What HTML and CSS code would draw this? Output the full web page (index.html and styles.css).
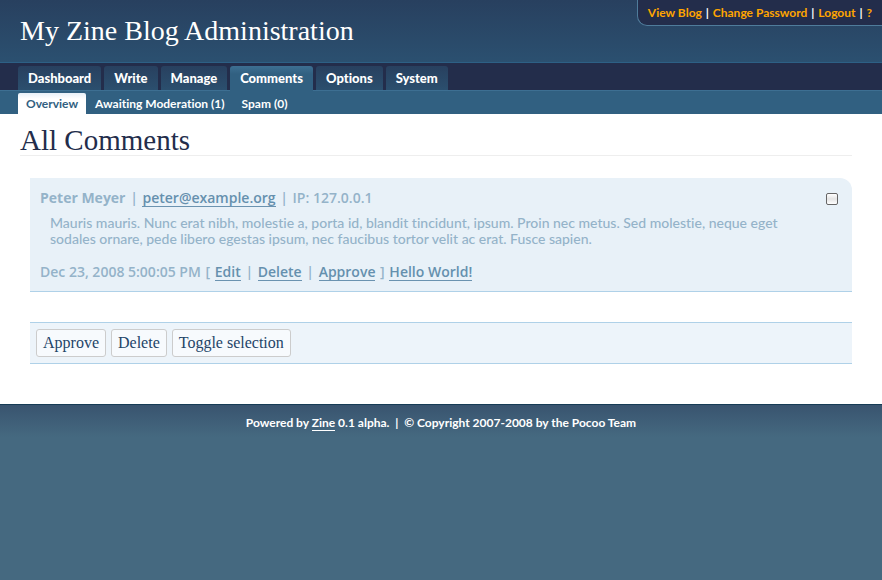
FILE: index.html
```html
<!DOCTYPE html>
<html lang="en">
<head>
<meta charset="utf-8">
<title>All Comments</title>
<link rel="stylesheet" href="styles.css">
</head>
<body>
<header class="header">
  <h1 class="title">My Zine Blog Administration</h1>
  <div class="account"><a href="#">View Blog</a> <span class="sep">|</span> <a href="#">Change Password</a> <span class="sep">|</span> <a href="#">Logout</a> <span class="sep">|</span> <a href="#">?</a></div>
</header>
<nav class="tabs">
  <a href="#">Dashboard</a>
  <a href="#">Write</a>
  <a href="#">Manage</a>
  <a href="#" class="active">Comments</a>
  <a href="#">Options</a>
  <a href="#">System</a>
</nav>
<nav class="subtabs">
  <a href="#" class="active">Overview</a>
  <a href="#">Awaiting Moderation (1)</a>
  <a href="#">Spam (0)</a>
</nav>
<main class="page">
  <h2 class="heading">All Comments</h2>
  <form class="comments">
    <article class="comment">
      <div class="comment-head">
        <p class="meta"><strong>Peter Meyer</strong> <span class="sep">|</span> <a href="#">peter@example.org</a> <span class="sep">|</span> IP: 127.0.0.1</p>
        <input type="checkbox" class="select" aria-label="Select comment">
      </div>
      <p class="text">Mauris mauris. Nunc erat nibh, molestie a, porta id, blandit tincidunt, ipsum. Proin nec metus. Sed molestie, neque eget sodales ornare, pede libero egestas ipsum, nec faucibus tortor velit ac erat. Fusce sapien.</p>
      <p class="meta">Dec 23, 2008 5:00:05 PM <span class="sep">[</span> <a href="#">Edit</a> <span class="sep">|</span> <a href="#">Delete</a> <span class="sep">|</span> <a href="#">Approve</a> <span class="sep">]</span> <a href="#">Hello World!</a></p>
    </article>
    <div class="actions">
      <button type="button">Approve</button>
      <button type="button">Delete</button>
      <button type="button">Toggle selection</button>
    </div>
  </form>
</main>
<footer class="footer">Powered by <a href="#">Zine</a> 0.1 alpha. &nbsp;|&nbsp; © Copyright 2007-2008 by the Pocoo Team</footer>
</body>
</html>
```
FILE: styles.css
```css
* { box-sizing: border-box; }

body {
  margin: 0;
  min-height: 100vh;
  display: flex;
  flex-direction: column;
  background: #fff;
  font-family: Lato, sans-serif;
  font-variant-ligatures: none;
}

h1, h2, p { margin: 0; }

.sep { margin: 0 1px; }

.header {
  display: flex;
  justify-content: space-between;
  align-items: flex-start;
  height: 63px;
  padding-left: 20px;
  background: linear-gradient(#28405f, #2b5070);
  border-bottom: 1px solid #2d6085;
}

.title {
  padding-top: 14px;
  font: 400 28px/34px "Liberation Serif", serif;
  color: #fff;
}

.account {
  height: 26px;
  padding: 0 10px;
  border: solid #4f7c9b;
  border-width: 0 0 1px 1px;
  border-bottom-left-radius: 10px;
  background: #232d4b;
  color: #fff;
  font-size: 12px;
  font-weight: 700;
  line-height: 26px;
}

.account a {
  color: #ffa500;
  text-decoration: none;
}

.tabs {
  display: flex;
  gap: 3px;
  height: 28px;
  padding: 3px 18px 0;
  background: linear-gradient(#232d4b 27px, #3d6f92 27px);
}

.tabs a {
  height: 24px;
  padding: 0 10px;
  border-radius: 3px 3px 0 0;
  background: linear-gradient(#28405f, #2b4f6e);
  color: #fff;
  font-size: 13px;
  font-weight: 900;
  line-height: 25px;
  text-decoration: none;
}

.tabs .active {
  height: 25px;
  background: linear-gradient(#3d6f92, #316081 8px);
}

.subtabs {
  display: flex;
  gap: 1px;
  height: 23px;
  padding: 2px 18px 0;
  background: #316081;
}

.subtabs a {
  padding: 0 8px;
  border-radius: 2px 2px 0 0;
  color: #fff;
  font-size: 12px;
  font-weight: 700;
  line-height: 21px;
  text-decoration: none;
}

.subtabs .active {
  background: linear-gradient(#e7f0f8, #fff 6px);
  color: #316081;
}

.page { padding: 8px 30px 40px 20px; }

.heading {
  height: 34px;
  border-bottom: 1px solid #eee;
  font: 400 29px/36px "Liberation Serif", serif;
  color: #232d4b;
}

.comments {
  margin: 22px 0 0 10px;
}

.comment {
  padding: 10px 10px 9px;
  border-bottom: 1px solid #afd1e8;
  border-top-right-radius: 12px;
  background: #e8f1f8;
  color: #94b3c9;
}

.comment-head {
  display: flex;
  justify-content: space-between;
  align-items: center;
}

.meta {
  font-family: "Open Sans", sans-serif;
  font-size: 14px;
  font-weight: 600;
  line-height: 20px;
}

.meta strong { font-weight: 700; }

.meta a {
  display: inline-block;
  border-bottom: 1px solid #6b93b0;
  color: #6590ae;
  line-height: 16px;
  text-decoration: none;
}

.select {
  appearance: none;
  width: 12px;
  height: 12px;
  margin: 2px 4px 0 0;
  border: 1px solid #666;
  border-radius: 2px;
  background: linear-gradient(#fff, #e4e4e4 50%, #fff);
}

.text {
  padding: 7px 40px 15px 10px;
  font-size: 14px;
  font-weight: 500;
  line-height: 16px;
}

.actions {
  display: flex;
  gap: 5px;
  margin-top: 30px;
  padding: 6px;
  border: solid #afd1e8;
  border-width: 1px 0;
  background: #edf4fa;
}

.actions button {
  height: 28px;
  padding: 0 6px;
  border: 1px solid #ccc;
  border-radius: 3px;
  background: #f7fafd;
  color: #234468;
  font: 400 16px/24px "Liberation Serif", serif;
}

.footer {
  flex: 1;
  padding-top: 10px;
  border-top: 1px solid #163c55;
  background: linear-gradient(#39546f, #456980 32px);
  color: #fff;
  font-size: 12px;
  font-weight: 700;
  line-height: 16px;
  text-align: center;
}

.footer a {
  display: inline-block;
  border-bottom: 1px solid #fff;
  color: #fff;
  line-height: 14px;
  text-decoration: none;
}
```
